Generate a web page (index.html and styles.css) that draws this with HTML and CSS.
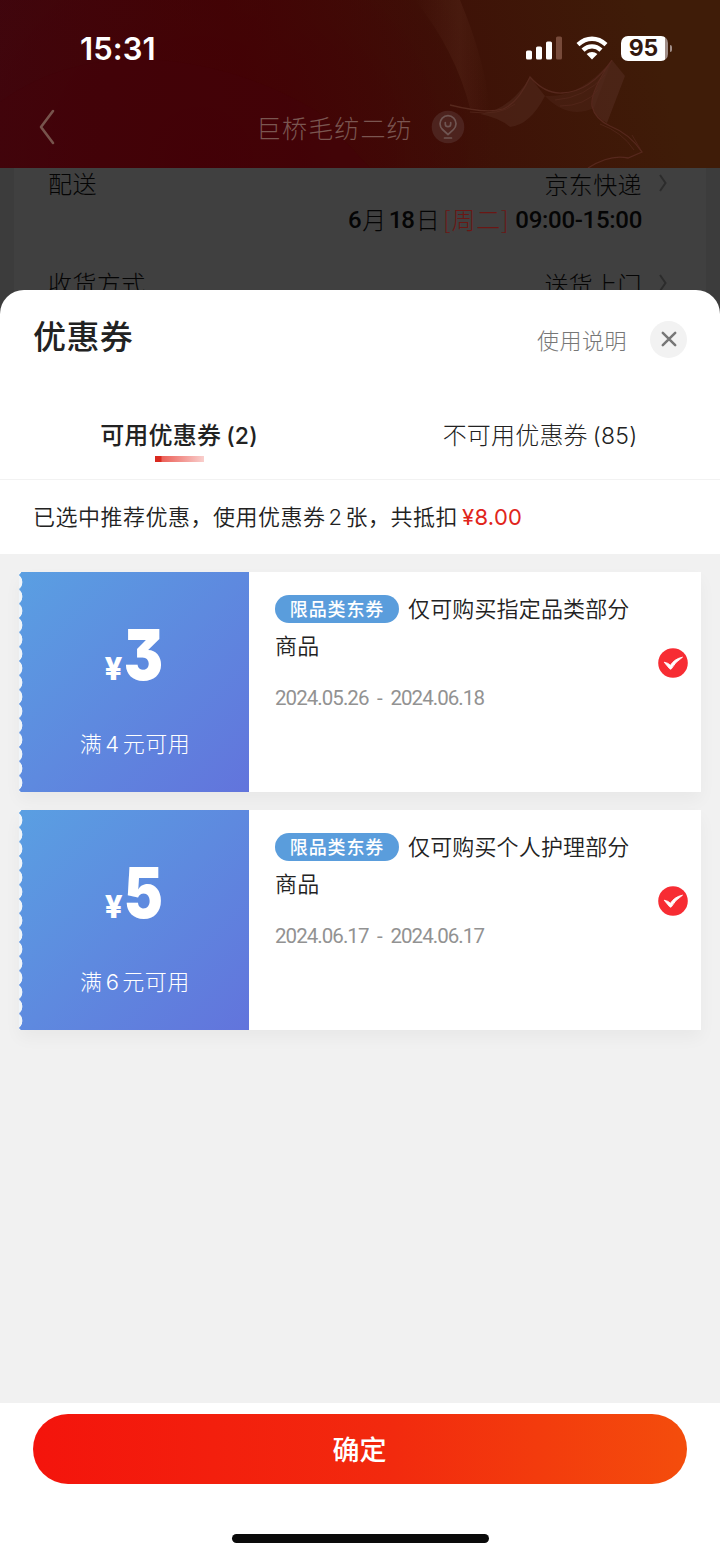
FILE: index.html
```html
<!DOCTYPE html>
<html lang="zh-CN">
<head>
  <meta charset="UTF-8">
  <title>优惠券</title>
  <link rel="stylesheet" href="styles.css">
</head>
<body>
  <div class="page">

    <div class="header">
      <svg class="header-deco" viewBox="0 0 720 168" width="720" height="168">
        <defs>
          <linearGradient id="beam" x1="0" y1="0" x2="1" y2="0">
            <stop offset="0" stop-color="#5a2a1c" stop-opacity="0"/>
            <stop offset=".6" stop-color="#5a2a1c" stop-opacity=".35"/>
            <stop offset="1" stop-color="#5a2a1c" stop-opacity="0"/>
          </linearGradient>
        </defs>
        <path d="M0 102Q60 58 145 59Q240 64 318 112L370 168H0Z" fill="#430209" opacity=".4"/>
        <path d="M415 0H460Q485 60 490 110L470 108Q455 50 415 0Z" fill="url(#beam)"/>
        <path d="M530 77L545 96Q530 125 510 127Q500 118 480 114Q510 110 530 77Z" fill="#532c20" opacity=".5"/>
        <path d="M545 96Q580 98 612 60L594 108Q568 120 545 96Z" fill="#532c20" opacity=".35"/>
        <path d="M612 60L625 76L607 123Q592 115 592 101Q594 88 612 60Z" fill="#532c20" opacity=".6"/>
        <path d="M450 105Q486 114 503 109Q518 103 530 77Q545 94 562 93Q590 92 612 60Q590 92 592 106Q595 119 610 126Q630 134 642 152L628 158Q610 154 588 168" fill="none" stroke="#56281d" stroke-width="1.3"/>
        <path d="M470 112Q500 116 515 104M555 100Q585 98 605 75M560 106Q585 106 598 90M600 124Q622 132 634 150M632 135L642 152" fill="none" stroke="#56281d" stroke-width="1" opacity=".7"/>
      </svg>
      <div class="status">
        <span class="time">15:31</span>
        <div class="status-icons">
          <svg width="36" height="24" viewBox="0 0 36 24">
            <rect x="0" y="14.5" width="6" height="9" rx="1.6" fill="#fff"/>
            <rect x="10" y="10.5" width="6" height="13" rx="1.6" fill="#fff"/>
            <rect x="20" y="5.5" width="6" height="18" rx="1.6" fill="#fff"/>
            <rect x="30" y="0.5" width="6" height="23" rx="1.6" fill="#774a3a"/>
          </svg>
          <svg class="wifi" width="32" height="24" viewBox="0 0 32 24">
            <g fill="none" stroke="#fff" stroke-width="4.4">
              <path d="M2 8.6Q8.5 2.7 16 2.7T30 8.6"/>
              <path d="M7 14.1Q11 10.4 16 10.4T25 14.1"/>
            </g>
            <path d="M16 23.5L10.6 18Q13 16 16 16T21.4 18Z" fill="#fff"/>
          </svg>
          <div class="battery"><span>95</span></div>
        </div>
      </div>
      <div class="nav">
        <svg class="back" width="18" height="38" viewBox="0 0 18 38">
          <path d="M15 3L3 19L15 35" fill="none" stroke="#77534c" stroke-width="2.6" stroke-linecap="round" stroke-linejoin="round"/>
        </svg>
        <span class="address">巨桥毛纺二纺</span>
        <svg class="pin" width="34" height="34" viewBox="0 0 34 34">
          <circle cx="17" cy="17" r="16.3" fill="#4d231e"/>
          <g fill="none" stroke="#6f5552" stroke-width="1.7" stroke-linecap="round" stroke-linejoin="round">
            <path d="M17 24.5L11.5 19.5A8 8 0 1 1 22.5 19.5ZM13.5 28H20.5"/>
            <path d="M14.3 12.5V14A2.7 2.7 0 0 0 19.7 14V12.5"/>
          </g>
        </svg>
      </div>
    </div>

    <div class="order">
      <div class="order-row">
        <span>配送</span>
        <div class="order-value">京东快递
          <svg width="8" height="18" viewBox="0 0 8 18"><path d="M1 1L6.5 9L1 17" fill="none" stroke="#2c2c2c" stroke-width="2"/></svg>
        </div>
      </div>
      <div class="order-time"><b>6</b>月<b>18</b>日<i>[周二]</i><b class="hours">09:00-15:00</b></div>
      <div class="order-row">
        <span>收货方式</span>
        <div class="order-value">送货上门
          <svg width="8" height="18" viewBox="0 0 8 18"><path d="M1 1L6.5 9L1 17" fill="none" stroke="#2c2c2c" stroke-width="2"/></svg>
        </div>
      </div>
    </div>

    <div class="sheet">
      <div class="sheet-head">
        <h2>优惠券</h2>
        <span class="help">使用说明</span>
        <div class="close">
          <svg width="16" height="16" viewBox="0 0 16 16"><path d="M1.8 1.8L14.2 14.2M14.2 1.8L1.8 14.2" stroke="#777" stroke-width="2.5" stroke-linecap="round"/></svg>
        </div>
      </div>

      <div class="tabs">
        <div class="tab active">可用优惠券<span>(2)</span></div>
        <div class="tab">不可用优惠券<span>(85)</span></div>
      </div>

      <div class="notice">已选中推荐优惠，使用优惠券<span class="num">2</span>张，共抵扣<span class="price">¥8.00</span></div>

      <div class="list">
        <div class="coupon">
          <div class="amount">
            <div class="money"><small>¥</small><strong>3</strong></div>
            <div class="limit">满<span>4</span>元可用</div>
          </div>
          <div class="info">
            <div class="desc"><span class="tag">限品类东券</span>仅可购买指定品类部分<br>商品</div>
            <div class="date">2024.05.26 - 2024.06.18</div>
          </div>
          <svg class="check" width="30" height="30" viewBox="0 0 30 30">
            <circle cx="15" cy="15" r="14.8" fill="#f72c33"/>
            <path d="M6.2 14.2Q10.5 15 12.4 17.3Q16.5 10.8 24.5 9.2Q16.8 14.2 13.4 20.8Q12.4 21.6 11.5 20.6Z" fill="#fff" stroke="#fff" stroke-width=".9" stroke-linejoin="round"/>
          </svg>
        </div>

        <div class="coupon">
          <div class="amount">
            <div class="money"><small>¥</small><strong>5</strong></div>
            <div class="limit">满<span>6</span>元可用</div>
          </div>
          <div class="info">
            <div class="desc"><span class="tag">限品类东券</span>仅可购买个人护理部分<br>商品</div>
            <div class="date">2024.06.17 - 2024.06.17</div>
          </div>
          <svg class="check" width="30" height="30" viewBox="0 0 30 30">
            <circle cx="15" cy="15" r="14.8" fill="#f72c33"/>
            <path d="M6.2 14.2Q10.5 15 12.4 17.3Q16.5 10.8 24.5 9.2Q16.8 14.2 13.4 20.8Q12.4 21.6 11.5 20.6Z" fill="#fff" stroke="#fff" stroke-width=".9" stroke-linejoin="round"/>
          </svg>
        </div>
      </div>

      <div class="footer">
        <button class="confirm">确定</button>
        <div class="home-bar"></div>
      </div>
    </div>

  </div>
</body>
</html>
```
FILE: styles.css
```css
* {
  box-sizing: border-box;
}

body {
  margin: 0;
  font-family: "Noto Sans CJK SC", sans-serif;
  font-weight: 300;
  color: #222;
}

.page {
  position: relative;
  width: 720px;
  height: 1558px;
  overflow: hidden;
  background: #3c3c3c;
}

/* header */
.header {
  position: relative;
  height: 168px;
  background:
    radial-gradient(circle at 200px 160px, rgba(67,0,4,.85), rgba(67,0,4,0) 300px),
    linear-gradient(75deg, #3f0710 0%, #420506 35%, #3e1007 60%, #3f1c08 90%);
}

.header-deco {
  position: absolute;
  left: 0;
  top: 0;
}

.status {
  position: relative;
  display: flex;
  justify-content: space-between;
  align-items: center;
  height: 96px;
  padding: 0 49px 0 80px;
}

.time {
  font-family: Inter, sans-serif;
  font-size: 31px;
  font-weight: 600;
  letter-spacing: .1px;
  color: #fff;
}

.status-icons {
  display: flex;
  align-items: center;
}

.wifi {
  margin: 0 13px 0 14px;
}

.battery {
  position: relative;
  width: 47px;
  height: 25px;
  border-radius: 7px;
  background: linear-gradient(90deg, #fff 44px, #a18e88 44px);
  font: 700 23px/25px Inter, sans-serif;
  color: #33180d;
  text-align: center;
  margin-right: 3px;
}

.battery span {
  margin-right: 2px;
}

.battery::after {
  content: "";
  position: absolute;
  right: -4px;
  top: 9px;
  width: 2px;
  height: 7px;
  border-radius: 0 3px 3px 0;
  background: #a18e88;
}

.nav {
  position: relative;
  display: flex;
  align-items: center;
  height: 62px;
  padding-left: 38px;
}

.address {
  margin: 0 0 1px 200px;
  font-size: 25px;
  letter-spacing: 1.1px;
  color: #7a5651;
}

.pin {
  margin-left: 18px;
}

/* order page under the sheet */
.order {
  width: 692px;
  height: 200px;
  margin: 0 auto;
  padding: 0 39px 0 34px;
  background: #404040;
  font-size: 24px;
  letter-spacing: .4px;
  color: #050505;
}

.order-row {
  display: flex;
  justify-content: space-between;
  height: 34px;
  line-height: 29px;
}

.order-value {
  display: flex;
  align-items: center;
  height: 30px;
  gap: 17px;
}

.order-time {
  display: flex;
  justify-content: flex-end;
  padding-right: 25px;
  height: 66px;
  line-height: 34px;
}

.order-time b {
  margin: 0 2px 0 2px;
  font-family: Roboto, sans-serif;
  font-size: 24px;
  line-height: 36px;
  font-weight: 500;
  letter-spacing: -1.2px;
}

.order-time i {
  margin-left: 3px;
  font-style: normal;
  letter-spacing: .8px;
  color: #6a1714;
}

.order-time .hours {
  margin: 0 0 0 6px;
  letter-spacing: -0.3px;
}

/* coupon sheet */
.sheet {
  position: absolute;
  top: 290px;
  left: 0;
  right: 0;
  bottom: 0;
  display: flex;
  flex-direction: column;
  background: #fff;
  border-radius: 24px 24px 0 0;
  overflow: hidden;
}

.sheet-head {
  display: flex;
  align-items: center;
  height: 98px;
  padding: 0 33px 0 33px;
}

.sheet-head h2 {
  flex: 1;
  margin: 0 0 9px;
  font-size: 33px;
  font-weight: 500;
  letter-spacing: .4px;
}

.help {
  margin: 0 23px 1px 0;
  font-size: 22px;
  letter-spacing: .5px;
  color: #777;
}

.close {
  display: flex;
  align-items: center;
  justify-content: center;
  width: 37px;
  height: 37px;
  border-radius: 50%;
  background: #f2f2f2;
}

.tabs {
  display: grid;
  grid-template-columns: 1fr 1fr;
  height: 92px;
  border-bottom: 1px solid #f2f2f2;
}

.tab {
  position: relative;
  font-size: 24px;
  line-height: 92px;
  letter-spacing: .2px;
  text-align: center;
}

.tab span {
  margin-left: 5px;
  font-family: Inter, sans-serif;
  font-size: 23px;
}

.tab.active {
  padding-right: 2px;
  font-weight: 500;
}

.tab.active span {
  font-weight: 550;
}

.tab.active::after {
  content: "";
  position: absolute;
  left: 155px;
  top: 68px;
  width: 49px;
  height: 6px;
  background: linear-gradient(90deg, #d9291f 6px, #ec6058 7px, #f9cfcd);
}

.notice {
  height: 74px;
  padding-left: 33px;
  font-size: 22px;
  font-weight: 350;
  line-height: 71px;
  letter-spacing: .5px;
  white-space: nowrap;
}

.num {
  margin: 0 3px;
  font-family: Inter, sans-serif;
}

.price {
  margin-left: 4px;
  font-family: Inter, sans-serif;
  font-weight: 400;
  letter-spacing: .3px;
  color: #e1251b;
}

.list {
  flex: 1;
  padding: 18px 19px;
  background: #f1f1f1;
}

.coupon {
  display: flex;
  height: 220px;
  margin-bottom: 18px;
  background: #fff;
  box-shadow: 0 8px 16px rgba(0,0,0,.04);
}

/* ticket edge is a column of round notches */
.amount {
  width: 230px;
  padding-top: 46px;
  background:
    radial-gradient(circle at -5.5px 50%, #f0f5f9 8.6px, transparent 9.2px) 0 3px / 20px 14.33px repeat-y,
    linear-gradient(135deg, #5a9fe2, #6274dc);
  color: #fff;
  text-align: center;
}

.money {
  display: flex;
  justify-content: center;
  align-items: baseline;
  height: 98px;
  padding-left: 3px;
  line-height: 74px;
}

.money small {
  font-family: Inter, sans-serif;
  font-size: 31px;
  font-weight: 800;
}

.money strong {
  margin-left: -3px;
  font-family: Inter, sans-serif;
  font-size: 70px;
  font-weight: 900;
  font-feature-settings: "cv09";
  transform: scaleX(.84);
}

.limit {
  padding-left: 2px;
  font-size: 22px;
  line-height: 52px;
  letter-spacing: .5px;
}

.limit span {
  margin: 0 3px;
  font-family: Inter, sans-serif;
}

.info {
  flex: 1;
  padding: 17px 0 0 26px;
}

.desc {
  font-size: 22px;
  font-weight: 350;
  line-height: 37px;
  letter-spacing: .15px;
  white-space: nowrap;
}

.tag {
  display: inline-block;
  width: 124px;
  height: 28px;
  margin-right: 9px;
  border-radius: 14px;
  background: #5a9ddc;
  font-size: 18px;
  font-weight: 500;
  line-height: 27px;
  letter-spacing: .9px;
  text-align: center;
  vertical-align: 1px;
  color: #fff;
}

.date {
  margin-top: 20px;
  font-family: Roboto, sans-serif;
  font-size: 20.5px;
  font-weight: 400;
  line-height: 30px;
  letter-spacing: -0.95px;
  word-spacing: 4.5px;
  color: #929292;
}

.check {
  align-self: center;
  margin: 0 13px 38px 0;
}

.footer {
  display: flex;
  flex-direction: column;
  align-items: center;
  height: 155px;
  padding-top: 11px;
  background: #fff;
}

.confirm {
  width: 654px;
  height: 70px;
  padding: 0 7px 2px 6px;
  border: none;
  border-radius: 35px;
  background: linear-gradient(90deg, #f4140c, #f22a0e 55%, #f44d0c);
  font-family: "Noto Sans CJK SC", sans-serif;
  font-size: 27px;
  font-weight: 500;
  color: #fff;
}

.home-bar {
  width: 257px;
  height: 9px;
  margin-top: 50px;
  border-radius: 5px;
  background: #0a0a0a;
}
```
